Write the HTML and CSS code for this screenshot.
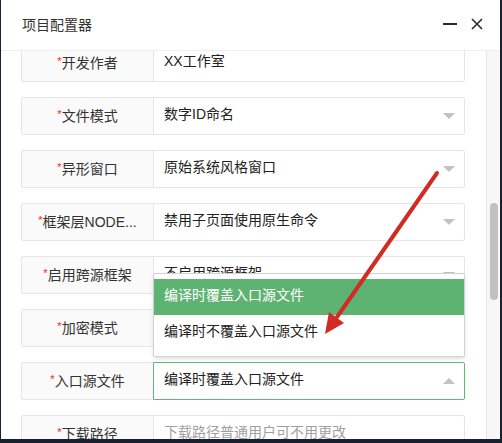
FILE: index.html
```html
<!DOCTYPE html>
<html lang="zh-CN">

<head>
    <meta charset="UTF-8">
    <meta name="viewport" content="width=device-width, initial-scale=1.0">
    <title>项目配置器</title>
    <link rel="stylesheet" href="styles.css">
</head>

<body>
    <div class="dialog">
        <!-- Title bar -->
        <div class="dialog-head">
            <span class="dialog-title">项目配置器</span>
            <div class="dialog-tools">
                <svg class="tool" width="14" height="14" viewBox="0 0 14 14">
                    <rect x="0" y="6" width="14" height="2" fill="#2b2b2b" />
                </svg>
                <svg class="tool" width="12" height="12" viewBox="0 0 12 12">
                    <path d="M1 1 L11 11 M11 1 L1 11" stroke="#2b2b2b" stroke-width="1.6" fill="none" />
                </svg>
            </div>
        </div>

        <!-- Body -->
        <div class="dialog-body">
            <div class="form">
                <div class="form-list">
                    <div class="form-item">
                        <label class="form-label"><span class="req">*</span>开发作者</label>
                        <div class="form-input">XX工作室</div>
                    </div>
                    <div class="form-item">
                        <label class="form-label"><span class="req">*</span>文件模式</label>
                        <div class="form-input select">数字ID命名<i class="edge"></i></div>
                    </div>
                    <div class="form-item">
                        <label class="form-label"><span class="req">*</span>异形窗口</label>
                        <div class="form-input select">原始系统风格窗口<i class="edge"></i></div>
                    </div>
                    <div class="form-item">
                        <label class="form-label"><span class="req">*</span>框架层NODE...</label>
                        <div class="form-input select">禁用子页面使用原生命令<i class="edge"></i></div>
                    </div>
                    <div class="form-item">
                        <label class="form-label"><span class="req">*</span>启用跨源框架</label>
                        <div class="form-input select">不启用跨源框架<i class="edge"></i></div>
                    </div>
                    <div class="form-item">
                        <label class="form-label"><span class="req">*</span>加密模式</label>
                        <div class="form-input select">不加密<i class="edge"></i></div>
                    </div>
                    <div class="form-item">
                        <label class="form-label"><span class="req">*</span>入口源文件</label>
                        <div class="form-input select opened">编译时覆盖入口源文件<i class="edge"></i>
                            <dl class="select-menu">
                                <dd class="this">编译时覆盖入口源文件</dd>
                                <dd>编译时不覆盖入口源文件</dd>
                            </dl>
                        </div>
                    </div>
                    <div class="form-item">
                        <label class="form-label"><span class="req">*</span>下载路径</label>
                        <div class="form-input placeholder">下载路径普通用户可不用更改</div>
                    </div>
                </div>
            </div>
            <div class="scroll-track">
                <div class="scroll-thumb"></div>
            </div>
        </div>

        <!-- annotation arrow -->
        <svg class="mark" width="502" height="443" viewBox="0 0 502 443">
            <line x1="437" y1="173" x2="337" y2="317" stroke="#d22b24" stroke-width="4" stroke-linecap="round" />
            <polygon points="325,334 344,323 329,312" fill="#d22b24" />
        </svg>
    </div>
</body>

</html>
```

FILE: styles.css
```css
body {
    margin: 0;
    background: #172231;
    font-family: "Liberation Sans", "Noto Sans CJK SC", sans-serif;
    font-size: 14px;
    color: #333;
}

.dialog {
    margin-left: 1px;
    width: 499px;
    height: 439px;
    background: #fff;
    display: flex;
    flex-direction: column;
    overflow: hidden;
}

.dialog-head {
    height: 50px;
    flex: none;
    border-bottom: 1px solid #eee;
    display: flex;
    align-items: center;
    justify-content: space-between;
    padding: 0 17px 2px 21px;
    box-sizing: border-box;
    height: 51px;
}

.dialog-title {
    font-size: 14px;
    color: #333;
}

.dialog-tools {
    display: flex;
    align-items: center;
    gap: 14px;
}

.tool {
    display: block;
}

.dialog-body {
    flex: 1;
    display: flex;
    overflow: hidden;
}

.form {
    flex: 1;
    padding: 0 21px 0 20px;
    overflow: hidden;
}

.form-list {
    margin-top: -7px;
}

.form-item {
    display: flex;
    height: 38px;
    margin-bottom: 15px;
}

.form-label {
    box-sizing: border-box;
    width: 133px;
    flex: none;
    background: #fafafa;
    border: 1px solid #e6e6e6;
    border-radius: 2px 0 0 2px;
    line-height: 32px;
    padding-bottom: 4px;
    text-align: center;
    white-space: nowrap;
    color: #333;
}

.req {
    color: #ff2020;
    font-size: 11px;
    vertical-align: 3px;
}

.form-input {
    box-sizing: border-box;
    flex: 1;
    margin-left: -1px;
    border: 1px solid #e6e6e6;
    border-radius: 0 2px 2px 0;
    line-height: 32px;
    padding: 0 10px 4px;
    color: #222;
    position: relative;
    white-space: nowrap;
}

.form-input.placeholder {
    color: #a0a0a0;
}

.select .edge {
    position: absolute;
    right: 9px;
    top: 50%;
    margin-top: -3px;
    width: 0;
    height: 0;
    border-style: solid;
    border-width: 6px 6px 0 6px;
    border-color: #c2c2c2 transparent transparent transparent;
}

.opened {
    border-color: #5fb878;
}

.opened .edge {
    margin-top: -3px;
    border-width: 0 6px 6px 6px;
    border-color: transparent transparent #c2c2c2 transparent;
}

.select-menu {
    position: absolute;
    left: -1px;
    right: -1px;
    bottom: 42px;
    margin: 0;
    padding: 5px 0;
    background: #fff;
    border: 1px solid #d2d2d2;
    border-radius: 2px;
    box-shadow: 0 2px 4px rgba(0, 0, 0, .12);
    z-index: 5;
}

.select-menu dd {
    margin: 0;
    height: 36px;
    line-height: 32px;
    padding: 0 10px 4px;
    box-sizing: border-box;
    color: #222;
}

.select-menu dd.this {
    background: #5fb372;
    color: #fff;
}

.scroll-track {
    width: 13px;
    flex: none;
    background: #f7f7f7;
    border-left: 1px solid #e6e6e6;
    position: relative;
}

.scroll-thumb {
    position: absolute;
    left: 3px;
    top: 152px;
    width: 8px;
    height: 97px;
    border-radius: 4px;
    background: #c1c1c1;
}

.mark {
    position: absolute;
    left: 0;
    top: 0;
    pointer-events: none;
    z-index: 10;
}
```
